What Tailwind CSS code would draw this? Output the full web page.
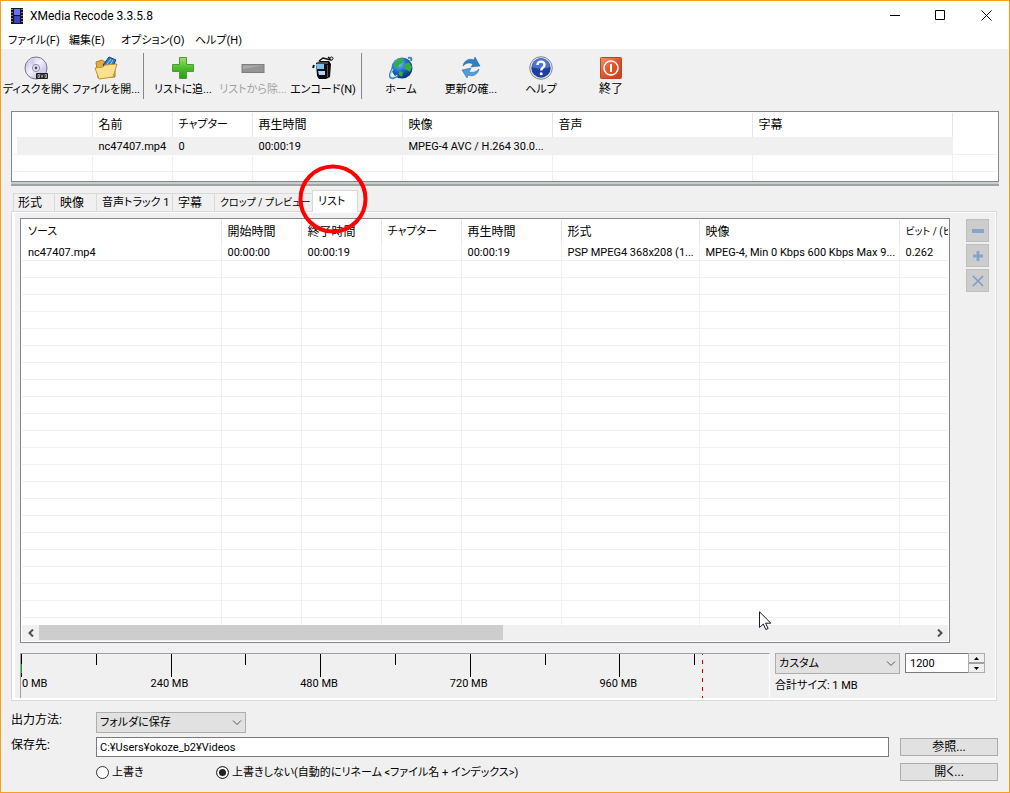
<!DOCTYPE html>
<html lang="ja">
<head>
<meta charset="utf-8">
<meta name="viewport" content="width=device-width, initial-scale=1">
<title>XMedia Recode 3.3.5.8</title>
<script src="https://cdn.jsdelivr.net/npm/@tailwindcss/browser@4"></script>
</head>
<body class="bg-[#f0f0f0] text-black">
<div class="relative flex h-screen min-h-[600px] flex-col overflow-hidden border border-[#f9a01b] bg-[#f0f0f0] font-['Roboto','Noto_Sans_CJK_JP',sans-serif] text-[11px] leading-4 whitespace-nowrap [font-feature-settings:'palt']">

  <!-- Title bar -->
  <header class="flex h-[29px] shrink-0 items-center bg-white pl-[10px]">
    <svg class="h-4 w-3" viewBox="0 0 12 16"><rect width="12" height="16" fill="#15151f"/><rect x="3" y="1" width="6" height="6" fill="#6a72f0"/><rect x="3" y="8" width="6" height="7" fill="#3a42c0"/><path d="M1 1v15M11 1v15" stroke="#e8e8f0" stroke-width="1" stroke-dasharray="1 2"/></svg>
    <h1 class="ml-[7px] flex-1 text-xs">XMedia Recode 3.3.5.8</h1>
    <button aria-label="最小化" class="flex h-full w-[46px] items-center justify-center"><svg class="size-[11px]" viewBox="0 0 11 11"><path d="M0 5.5h10" stroke="#000"/></svg></button>
    <button aria-label="最大化" class="flex h-full w-[45px] items-center justify-center"><svg class="size-[11px]" viewBox="0 0 11 11" fill="none"><path d="M.5.5h9v9h-9z" stroke="#000"/></svg></button>
    <button aria-label="閉じる" class="flex h-full w-[46px] items-center justify-center"><svg class="size-[11px]" viewBox="0 0 11 11"><path d="M.5.5l10 10M10.5.5l-10 10" stroke="#000"/></svg></button>
  </header>

  <!-- Menu bar -->
  <nav class="flex h-[19px] shrink-0 items-end bg-white pl-[7px]">
    <button class="w-[61px] text-left">ファイル(F)</button>
    <button class="w-[52px] text-left">編集(E)</button>
    <button class="w-[74px] text-left">オプション(O)</button>
    <button>ヘルプ(H)</button>
  </nav>

  <!-- Toolbar -->
  <div role="toolbar" class="flex h-[61px] shrink-0 pt-[7px]">
    <button class="flex w-[70px] flex-col items-center">
      <svg class="size-6" viewBox="0 0 24 24"><defs><linearGradient id="disc" x1="0" y1="0" x2="1" y2="1"><stop offset="0" stop-color="#b9b6d8"/><stop offset=".45" stop-color="#f3f2ff"/><stop offset="1" stop-color="#a9a6cf"/></linearGradient></defs><circle cx="12" cy="12" r="11" fill="url(#disc)" stroke="#77758f"/><path d="M12 12L4 5a10 10 0 0 1 5-3zM12 12l8 7a10 10 0 0 0 2-5z" fill="#d2cdf5"/><circle cx="12" cy="12" r="3.6" fill="#e9e9f2" stroke="#8b88a8"/><circle cx="12" cy="12" r="1.4" fill="#4a4a5a"/><rect x="12" y="17" width="12" height="6" rx="1" fill="#1d1d22"/><path d="M14 18.500v3h1.500v-3zM17 18.500l1 3 1-3M21 18.500v3h1.500v-3z" stroke="#d9d9d9" stroke-width=".7" fill="none"/></svg>
      <span class="pt-[2px]">ディスクを開く</span>
    </button>
    <button class="flex w-[70px] flex-col items-center">
      <svg class="size-6" viewBox="0 0 24 24"><path d="M2 6l6-2 3 2 10 1v14l-17 1z" fill="#e3ab3d" stroke="#b27b1d"/><path d="M9 9l6-8 7 3-5 9z" fill="#2b7dc9" stroke="#16406e"/><path d="M13 8l4-5M16 9l3-5" stroke="#9bd6ff"/><path d="M1 12l8-1 2-2 12-1-4 13-14 2z" fill="#fbe08d" stroke="#c39232"/></svg>
      <span class="pt-[2px]">ファイルを開...</span>
    </button>
    <div class="-mt-[3px] ml-[2px] h-[46px] w-[5px] border-l border-[#878787]"></div>
    <button class="flex w-[70px] flex-col items-center">
      <svg class="size-6" viewBox="0 0 24 24"><defs><linearGradient id="plus" x1="0" y1="0" x2="0" y2="1"><stop offset="0" stop-color="#9ae36a"/><stop offset=".5" stop-color="#4cbc2c"/><stop offset="1" stop-color="#2f9a1c"/></linearGradient></defs><path d="M8.500 1.500h7v7h7v7h-7v7h-7v-7h-7v-7h7z" fill="url(#plus)" stroke="#4c9a38"/></svg>
      <span class="pt-[2px]">リストに追...</span>
    </button>
    <button disabled class="flex w-[70px] flex-col items-center text-[#a0a0a0]">
      <svg class="size-6" viewBox="0 0 24 24"><rect x="1" y="8.500" width="22" height="8" fill="#949494" stroke="#7d7d7d"/><path d="M2 13V9.500h20z" fill="#aaa"/></svg>
      <span class="pt-[2px]">リストから除...</span>
    </button>
    <button class="flex w-[70px] flex-col items-center">
      <svg class="size-6" viewBox="0 0 24 24"><path d="M5 7l4-2h9l2 3-1 13-4 2H8l-2-3z" fill="#0c0c10"/><path d="M8 5l4-3 8 2M17 1l4 3" stroke="#111" stroke-width="1.500" fill="none"/><circle cx="20.500" cy="2.500" r="1.500" fill="#eee" stroke="#111"/><path d="M5 8h8v5H6z" fill="#7ac4f5"/><path d="M7 15h7v4H8z" fill="#b6d4ee"/><path d="M6 7h11" stroke="#8a8a8a"/><path d="M16.500 9v12" stroke="#555"/><path d="M3 9l-1 3" stroke="#111" stroke-width="2"/></svg>
      <span class="pt-[2px]">エンコード(N)</span>
    </button>
    <div class="-mt-[3px] ml-[3px] h-[46px] w-[5px] border-l border-[#878787]"></div>
    <button class="flex w-[70px] flex-col items-center">
      <svg class="size-6" viewBox="0 0 24 24"><defs><radialGradient id="globe" cx=".35" cy=".3" r=".8"><stop offset="0" stop-color="#79c9ff"/><stop offset=".5" stop-color="#1b64c8"/><stop offset="1" stop-color="#06265f"/></radialGradient></defs><circle cx="13" cy="12" r="10.500" fill="url(#globe)"/><path d="M6 6l5-4 4 1-2 4-3 2-1 4-4-3zM16 8l4-2 3 5-2 5-3-2-3-1zM10 15l4 1-1 5-3-2z" fill="#36ae3f"/><path d="M19 2c3-1 4 0 3 3M4 12c-4 6-4 10-1 10 3 1 5-2 6-3" stroke="#3887b8" stroke-width="2" fill="none"/><path d="M4 13c-3 5-3 8-1 8 2 0 4-1 5-2" stroke="#c1e8fb" fill="none"/></svg>
      <span class="pt-[2px]">ホーム</span>
    </button>
    <button class="flex w-[70px] flex-col items-center">
      <svg class="size-6" viewBox="0 0 24 24" fill="#2c7fc8" stroke="#1c5d9c" stroke-width=".5"><path d="M4 10C5 4 11 2 15 4l1-3 5 9-9 1 2-3C10 6 7 7 4 10z"/><path d="M20 13c-1 6-7 8-11 6l-1 3-5-8 9-2-2 4c4 1 7 0 10-3z" fill="#4ba0e0"/></svg>
      <span class="pt-[2px]">更新の確...</span>
    </button>
    <button class="flex w-[70px] flex-col items-center">
      <svg class="size-6" viewBox="0 0 24 24"><circle cx="12" cy="12" r="11.300" fill="#e6e6ea" stroke="#85858f"/><circle cx="12" cy="12" r="9.700" fill="#1e3f9f"/><path d="M3 11a9 9 0 0 1 18 0c-5 2-12 2-18 0z" fill="#4e73cf"/><path d="M8.500 9c0-4.500 7-4.500 7 0 0 2.500-3.300 2.500-3.300 5.500" stroke="#fff" stroke-width="2.400" fill="none"/><circle cx="12.200" cy="17.700" r="1.500" fill="#fff"/></svg>
      <span class="pt-[2px]">ヘルプ</span>
    </button>
    <button class="flex w-[70px] flex-col items-center">
      <svg class="size-6" viewBox="0 0 24 24"><defs><linearGradient id="quit" x1="0" y1="0" x2="1" y2="1"><stop offset="0" stop-color="#f29468"/><stop offset=".5" stop-color="#e2532b"/><stop offset="1" stop-color="#cf3c18"/></linearGradient></defs><rect x="1.500" y="1.500" width="21" height="21" rx="1" fill="url(#quit)" stroke="#b3492c"/><circle cx="12" cy="12" r="7" fill="none" stroke="#fff" stroke-width="1.500"/><path d="M12 8v8" stroke="#fff" stroke-width="2"/></svg>
      <span class="pt-px text-xs leading-4">終了</span>
    </button>
  </div>

  <!-- Source files -->
  <section class="mx-[10px] mt-px h-[75px] shrink-0 border-b-2 border-[#a0a5a4] bg-[#c9cfcd]">
    <div class="h-[71px] overflow-hidden border border-[#828790] bg-white px-px pt-px">
      <table class="w-full table-fixed border-collapse text-left">
        <colgroup><col class="w-[79px]"><col class="w-[80px]"><col class="w-[80px]"><col class="w-[150px]"><col class="w-[150px]"><col class="w-[200px]"><col class="w-[200px]"><col></colgroup>
        <thead><tr class="h-6 text-xs [&>th]:border-r [&>th]:border-[#e5e5e5] [&>th]:py-0 [&>th]:pr-0 [&>th]:pl-[6px] [&>th]:font-normal [&>th:last-child]:border-0"><th></th><th>名前</th><th class="text-[11px]">チャプター</th><th>再生時間</th><th>映像</th><th>音声</th><th>字幕</th><th></th></tr></thead>
        <tbody class="[&_td]:border-r [&_td]:border-b [&_td]:border-[#f0f0f0] [&_td]:pt-1 [&_td]:pr-0 [&_td]:pb-0 [&_td]:pl-[6px] [&_td]:leading-3 [&_td:last-child]:border-r-0">
          <tr class="h-[17px]"><td class="bg-[#f0f0f0] shadow-[inset_4px_0_0_#fff]"></td><td class="bg-[#f0f0f0]">nc47407.mp4</td><td class="bg-[#f0f0f0]">0</td><td class="bg-[#f0f0f0]">00:00:19</td><td class="bg-[#f0f0f0]">MPEG-4 AVC / H.264 30.0...</td><td class="bg-[#f0f0f0]"></td><td class="bg-[#f0f0f0]"></td><td></td></tr>
          <tr class="h-[17px]"><td></td><td></td><td></td><td></td><td></td><td></td><td></td><td></td></tr>
          <tr class="h-[17px]"><td></td><td></td><td></td><td></td><td></td><td></td><td></td><td></td></tr>
        </tbody>
      </table>
    </div>
  </section>

  <!-- Tabs -->
  <div role="tablist" class="mx-[12px] mt-1 flex h-[21px] shrink-0 items-end text-xs">
    <button role="tab" class="h-[18px] w-[41px] border-t border-l border-[#d9d9d9] pl-1 text-left">形式</button>
    <button role="tab" class="h-[18px] w-[42px] border-t border-l border-[#d9d9d9] pl-[5px] text-left">映像</button>
    <button role="tab" class="h-[18px] w-[76px] border-t border-l border-[#d9d9d9] pt-px pl-[5px] text-left text-[11px]">音声トラック 1</button>
    <button role="tab" class="h-[18px] w-[42px] border-t border-l border-[#d9d9d9] pl-[5px] text-left">字幕</button>
    <button role="tab" class="h-[18px] w-[98px] border-t border-l border-[#d9d9d9] pl-[5px] text-left text-[10px]">クロップ / プレビュー</button>
    <button role="tab" aria-selected="true" class="z-10 -mb-px h-[22px] w-[46px] border border-b-0 border-[#d9d9d9] bg-white pt-px pl-[5px] text-left text-[11px]">リスト</button>
  </div>

  <!-- Job list page -->
  <main class="mr-[12px] ml-[10px] flex min-h-0 flex-1 flex-col border border-[#d9d9d9] bg-white p-[3px] pt-px pr-px pb-[2px]">
    <div class="flex min-h-0 flex-1 flex-col bg-[#f0f0f0] pt-[5px] pl-[5px]">
      <div class="flex min-h-0 flex-1">
        <div class="flex min-w-0 flex-1 flex-col border border-[#828790] bg-white p-px">
          <div class="min-h-0 flex-1 overflow-hidden">
            <table class="w-full table-fixed border-collapse text-left">
              <colgroup><col class="w-[199px]"><col class="w-[80px]"><col class="w-[80px]"><col class="w-[80px]"><col class="w-[100px]"><col class="w-[138px]"><col class="w-[200px]"><col></colgroup>
              <thead><tr class="h-[23px] text-xs [&>th]:border-r [&>th]:border-[#e5e5e5] [&>th]:pt-px [&>th]:pr-0 [&>th]:pb-0 [&>th]:pl-[6px] [&>th]:font-normal [&>th:last-child]:border-0"><th class="text-[11px]">ソース</th><th>開始時間</th><th>終了時間</th><th class="text-[11px]">チャプター</th><th>再生時間</th><th>形式</th><th>映像</th><th class="text-[10px]">ビット / (ビ</th></tr></thead>
              <tbody id="jobs" class="[&_td]:h-[17px] [&_td]:border-r [&_td]:border-b [&_td]:border-[#f0f0f0] [&_td]:pt-1 [&_td]:pr-0 [&_td]:pb-0 [&_td]:pl-[6px] [&_td]:leading-3 [&_td:last-child]:border-r-0">
                <tr><td>nc47407.mp4</td><td>00:00:00</td><td>00:00:19</td><td></td><td>00:00:19</td><td>PSP MPEG4 368x208 (1...</td><td>MPEG-4, Min 0 Kbps 600 Kbps Max 9...</td><td>0.262</td></tr>
              </tbody>
            </table>
          </div>
          <div class="flex h-4 shrink-0 bg-[#f0f0f0]">
            <button aria-label="左へスクロール" class="flex w-[17px] items-center justify-center"><svg class="size-2" viewBox="0 0 8 8" fill="none" stroke="#505050" stroke-width="2"><path d="M6 .5L2.500 4 6 7.500"/></svg></button>
            <div class="flex flex-1"><div class="h-[15px] w-[52%] bg-[#cdcdcd]"></div></div>
            <button aria-label="右へスクロール" class="flex w-[17px] items-center justify-center"><svg class="size-2" viewBox="0 0 8 8" fill="none" stroke="#505050" stroke-width="2"><path d="M2 .5L5.500 4 2 7.500"/></svg></button>
          </div>
        </div>
        <div class="flex w-[45px] shrink-0 flex-col gap-[2px] pt-px pl-4">
          <button aria-label="削除" class="flex size-[23px] items-center justify-center border border-[#bfbfbf] bg-[#cccccc]"><svg class="size-3" viewBox="0 0 12 12"><path d="M0 4h12v4H0z" fill="#8ba3cb"/></svg></button>
          <button aria-label="追加" class="flex size-[23px] items-center justify-center border border-[#bfbfbf] bg-[#cccccc]"><svg class="size-3" viewBox="0 0 12 12"><path d="M4.500 1h3v3.500H11v3H7.500V11h-3V7.500H1v-3h3.500z" fill="#8ba3cb"/></svg></button>
          <button aria-label="すべて削除" class="flex size-[23px] items-center justify-center border border-[#bfbfbf] bg-[#cccccc]"><svg class="size-3" viewBox="0 0 12 12"><path d="M1 1l10 10M11 1L1 11" stroke="#8499c2" stroke-width="1.600"/></svg></button>
        </div>
      </div>

      <div class="mt-[10px] flex h-[45px] shrink-0">
        <!-- Size ruler -->
        <div class="relative grid flex-1 grid-cols-10 border-t border-r border-l border-[#a0a0a0] border-r-white leading-3">
          <div class="relative"><div class="h-[23px] w-px bg-black"></div><div class="absolute top-[10px] left-0 h-[9px] w-px bg-[#06b025]"></div><span class="absolute top-6 left-px">0 MB</span></div>
          <div><div class="h-[11px] w-px bg-black"></div></div>
          <div class="relative"><div class="h-[23px] w-px bg-black"></div><span class="absolute top-6 -left-5">240 MB</span></div>
          <div><div class="h-[11px] w-px bg-black"></div></div>
          <div class="relative"><div class="h-[23px] w-px bg-black"></div><span class="absolute top-6 -left-5">480 MB</span></div>
          <div><div class="h-[11px] w-px bg-black"></div></div>
          <div class="relative"><div class="h-[23px] w-px bg-black"></div><span class="absolute top-6 -left-5">720 MB</span></div>
          <div><div class="h-[11px] w-px bg-black"></div></div>
          <div class="relative"><div class="h-[23px] w-px bg-black"></div><span class="absolute top-6 -left-5">960 MB</span></div>
          <div class="flex gap-[7px]"><div class="h-[11px] w-px bg-black"></div><svg class="h-11 w-px" viewBox="0 0 1 44"><path d="M.5 0v44" stroke="#e00000" stroke-dasharray="4 5" stroke-dashoffset="3"/></svg></div>
        </div>
        <div class="ml-[5px] flex w-[220px] flex-col">
          <div class="flex gap-[5px]">
            <div class="relative w-[125px]">
              <select aria-label="サイズ" class="h-[21px] w-full appearance-none border border-[#adadad] bg-[#e1e1e1] pt-px pl-[3px]"><option>カスタム</option></select>
              <svg class="pointer-events-none absolute top-[7px] right-1 h-2 w-[10px]" viewBox="0 0 10 8" fill="none" stroke="#555"><path d="M1 1.500l4 4 4-4"/></svg>
            </div>
            <div class="flex h-5 w-[80px] border border-[#7a7a7a] bg-white">
              <input aria-label="サイズ (MB)" value="1200" class="min-w-0 flex-1 bg-white pt-px pl-1 outline-none">
              <div class="-my-px -mr-px flex w-[17px] flex-col border border-[#adadad] bg-[#f0f0f0]">
                <button aria-label="増やす" class="flex flex-1 items-center justify-center border-b border-[#a0a0a0]"><svg class="h-[3px] w-[5px]" viewBox="0 0 5 3"><path d="M0 3L2.500 0 5 3z"/></svg></button>
                <button aria-label="減らす" class="flex flex-1 items-center justify-center border-t border-[#a0a0a0]"><svg class="h-[3px] w-[5px]" viewBox="0 0 5 3"><path d="M0 0l2.500 3L5 0z"/></svg></button>
              </div>
            </div>
          </div>
          <p class="mt-1">合計サイズ: 1 MB</p>
        </div>
      </div>
    </div>
  </main>

  <!-- Output -->
  <form class="grid shrink-0 grid-cols-[85px_1fr_98px] pt-[11px] pr-[11px] pb-[10px] pl-[10px]">
    <label for="method" class="text-xs">出力方法:</label>
    <div class="relative h-[25px] w-[150px]">
      <select id="method" class="h-[21px] w-full appearance-none border border-[#adadad] bg-[#e1e1e1] pt-px pl-[3px]"><option>フォルダに保存</option></select>
      <svg class="pointer-events-none absolute top-[7px] right-1 h-2 w-[10px]" viewBox="0 0 10 8" fill="none" stroke="#555"><path d="M1 1.500l4 4 4-4"/></svg>
    </div>
    <span></span>
    <label for="dest" class="text-xs">保存先:</label>
    <div class="h-[25px] pr-[11px]"><input id="dest" value="C:¥Users¥okoze_b2¥Videos" class="h-5 w-full border border-[#7a7a7a] bg-white px-[3px] outline-none"></div>
    <button type="button" class="mt-px h-[18px] border border-[#adadad] bg-[#e1e1e1] text-xs leading-4">参照...</button>
    <span></span>
    <div class="flex h-5 items-center">
      <label class="flex w-[120px] items-center gap-[3px]"><input type="radio" name="over" class="size-[13px] appearance-none rounded-full border border-[#333] bg-white"><span class="pt-px">上書き</span></label>
      <label class="flex items-center gap-[3px]"><input type="radio" name="over" checked class="size-[13px] appearance-none rounded-full border border-[#333] bg-[#222] shadow-[inset_0_0_0_2px_#fff]"><span class="pt-px">上書きしない(自動的にリネーム &lt;ファイル名 + インデックス&gt;)</span></label>
    </div>
    <button type="button" class="mt-px h-[18px] border border-[#adadad] bg-[#e1e1e1] text-xs leading-4">開く...</button>
  </form>

  <!-- Highlight ring around the list tab -->
  <svg class="pointer-events-none absolute top-[163px] left-[297px] z-20 size-[70px]" viewBox="0 0 70 70" fill="none"><circle cx="35" cy="35" r="32.500" stroke="#fe0000" stroke-width="4"/></svg>
  <!-- Mouse pointer -->
  <svg class="pointer-events-none absolute top-[610px] left-[758px] z-20 h-[20px] w-[13px]" viewBox="0 0 13 20"><path d="M.5.700v15.800l3.800-3.500 2.500 5.500 2.300-1-2.500-5.300h5.200z" fill="#fff" stroke="#1a1a2a"/></svg>
</div>
<script>
  // Empty grid rows below the last job
  const jobs = document.getElementById('jobs');
  for (let i = 0; i < 22; i++) {
    const row = jobs.insertRow();
    for (let c = 0; c < 8; c++) row.insertCell();
  }
</script>
</body>
</html>
